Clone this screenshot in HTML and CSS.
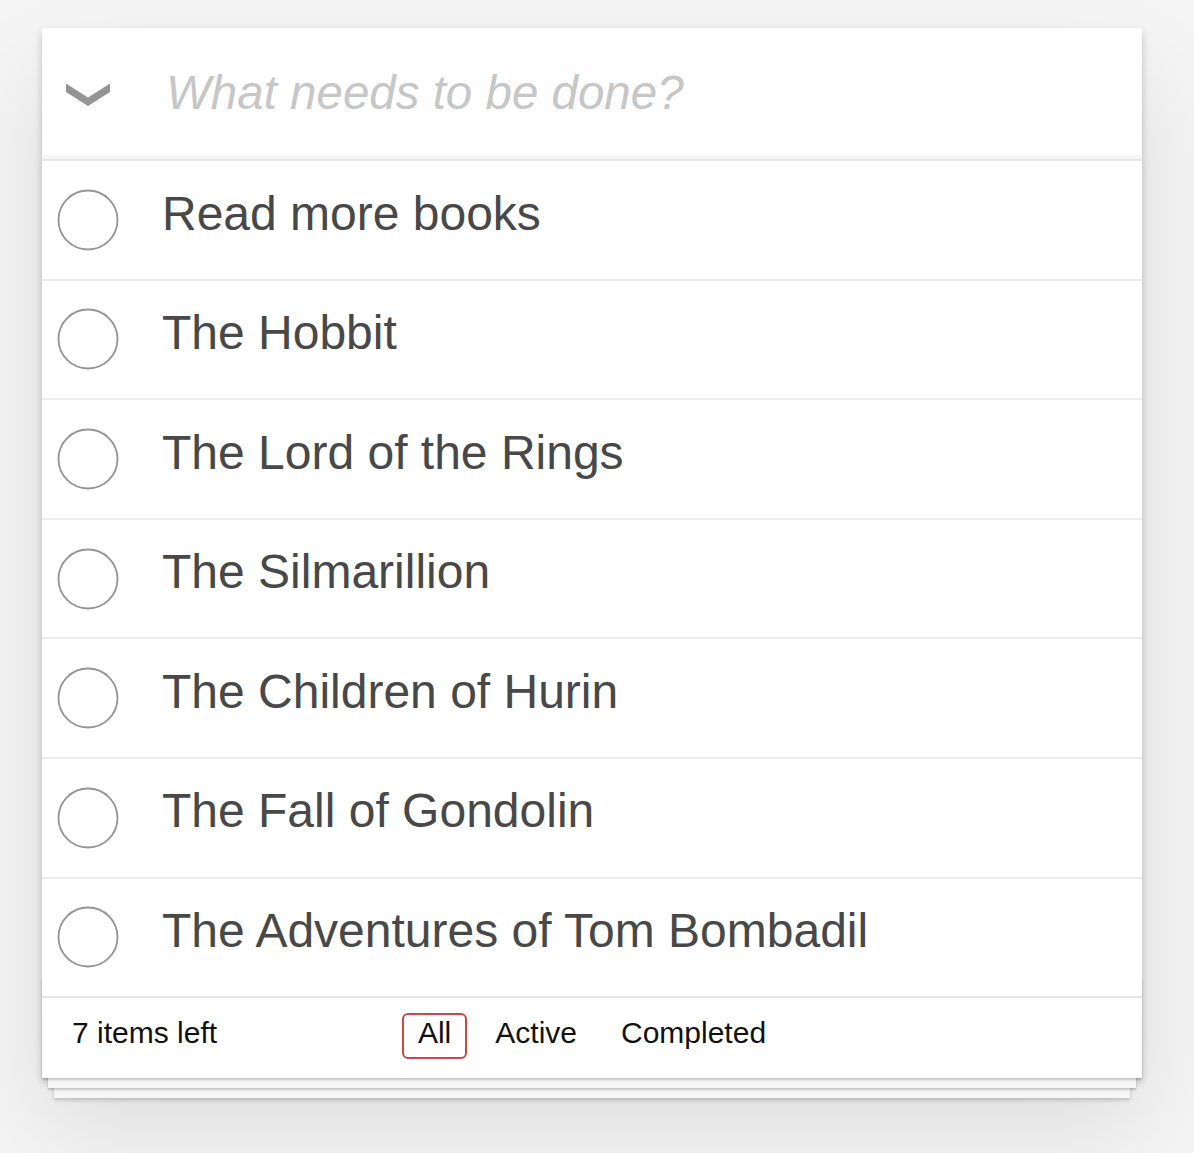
FILE: index.html
```html
<!DOCTYPE html>
<html lang="en">
<head>
<meta charset="utf-8">
<title>TodoMVC</title>
<link rel="stylesheet" href="styles.css">
</head>
<body>
<section class="todoapp">
  <header class="header">
    <div class="toggle-all">
      <svg width="44" height="23" viewBox="0 0 44 23"><polygon points="0,0.5 22,14.5 44,0.5 44,9 22,23 0,9" fill="#949494"/></svg>
    </div>
    <div class="new-todo">What needs to be done?</div>
  </header>
  <section class="main">
    <ul class="todo-list">
      <li class="item"><svg class="toggle" width="62" height="62" viewBox="0 0 62 62"><circle cx="31" cy="31" r="29.5" fill="none" stroke="#949494" stroke-width="1.8"/></svg><span class="label">Read more books</span></li>
      <li class="item"><svg class="toggle" width="62" height="62" viewBox="0 0 62 62"><circle cx="31" cy="31" r="29.5" fill="none" stroke="#949494" stroke-width="1.8"/></svg><span class="label">The Hobbit</span></li>
      <li class="item"><svg class="toggle" width="62" height="62" viewBox="0 0 62 62"><circle cx="31" cy="31" r="29.5" fill="none" stroke="#949494" stroke-width="1.8"/></svg><span class="label">The Lord of the Rings</span></li>
      <li class="item"><svg class="toggle" width="62" height="62" viewBox="0 0 62 62"><circle cx="31" cy="31" r="29.5" fill="none" stroke="#949494" stroke-width="1.8"/></svg><span class="label">The Silmarillion</span></li>
      <li class="item"><svg class="toggle" width="62" height="62" viewBox="0 0 62 62"><circle cx="31" cy="31" r="29.5" fill="none" stroke="#949494" stroke-width="1.8"/></svg><span class="label">The Children of Hurin</span></li>
      <li class="item"><svg class="toggle" width="62" height="62" viewBox="0 0 62 62"><circle cx="31" cy="31" r="29.5" fill="none" stroke="#949494" stroke-width="1.8"/></svg><span class="label">The Fall of Gondolin</span></li>
      <li class="item"><svg class="toggle" width="62" height="62" viewBox="0 0 62 62"><circle cx="31" cy="31" r="29.5" fill="none" stroke="#949494" stroke-width="1.8"/></svg><span class="label">The Adventures of Tom Bombadil</span></li>
    </ul>
  </section>
  <footer class="footer">
    <span class="todo-count">7 items left</span>
    <ul class="filters">
      <li><a class="filter selected" href="#/">All</a></li>
      <li><a class="filter" href="#/active">Active</a></li>
      <li><a class="filter" href="#/completed">Completed</a></li>
    </ul>
    <span class="spacer"></span>
  </footer>
</section>
</body>
</html>
```
FILE: styles.css
```css
html, body {
  margin: 0;
  padding: 0;
}
body {
  background: #f5f5f5;
  font-family: "Liberation Sans", Arial, Helvetica, sans-serif;
  color: #111111;
  min-height: 1153px;
}
.todoapp {
  width: 1100px;
  margin: 28px 0 0 42px;
  background: #fff;
  position: relative;
  box-shadow: 0 4px 8px 0 rgba(0, 0, 0, 0.2), 0 50px 100px 0 rgba(0, 0, 0, 0.1);
}
.header {
  display: flex;
  align-items: center;
  height: 131px;
  box-shadow: inset 0 -4px 2px rgba(0, 0, 0, 0.03);
  background: rgba(0, 0, 0, 0.003);
}
.toggle-all {
  width: 120px;
  display: flex;
  justify-content: flex-start;
  padding-left: 24px;
  box-sizing: border-box;
  margin-top: 2px;
}
.toggle-all svg {
  display: block;
}
.new-todo {
  font-size: 47.5px;
  font-style: italic;
  color: #c6c6c6;
  line-height: 67px;
  padding-left: 4px;
  margin-top: -2px;
}
.main {
  border-top: 2px solid #e6e6e6;
}
.todo-list {
  margin: 0;
  padding: 0;
  list-style: none;
}
.item {
  display: flex;
  align-items: center;
  height: 117.6px;
  border-bottom: 2px solid #ededed;
}
.item:last-child {
  border-bottom: none;
  height: 117.6px;
}
.toggle {
  display: block;
  margin-left: 15px;
  flex: none;
}
.label {
  font-size: 48px;
  line-height: 57.6px;
  color: #484848;
  padding-left: 43px;
  margin-top: -13px;
}
.footer {
  position: relative;
  display: grid;
  grid-template-columns: 1fr auto 1fr;
  grid-template-rows: 40px;
  align-items: start;
  height: 40px;
  padding: 20px 30px;
  border-top: 2px solid #e6e6e6;
  font-size: 30px;
  line-height: 34px;
  color: #111;
}
.footer::before {
  content: '';
  position: absolute;
  right: 0;
  bottom: 0;
  left: 0;
  height: 100px;
  overflow: hidden;
  box-shadow: 0 2px 2px rgba(0, 0, 0, 0.2),
    0 16px 0 -6px #f6f6f6,
    0 18px 2px -6px rgba(0, 0, 0, 0.2),
    0 32px 0 -12px #f6f6f6,
    0 34px 4px -12px rgba(0, 0, 0, 0.2);
}
.todo-count {
  justify-self: start;
  position: relative;
  margin-top: -2px;
}
.filters {
  display: flex;
  margin: -11px 0 0 0;
  padding: 0;
  list-style: none;
  position: relative;
}
.filter {
  display: block;
  color: inherit;
  margin: 6px;
  padding: 1px 14px 7px;
  text-decoration: none;
  border: 2px solid transparent;
  border-radius: 6px;
  line-height: 34px;
}
.filter.selected {
  border-color: #ce4646;
}
.spacer {
  display: block;
}
```
